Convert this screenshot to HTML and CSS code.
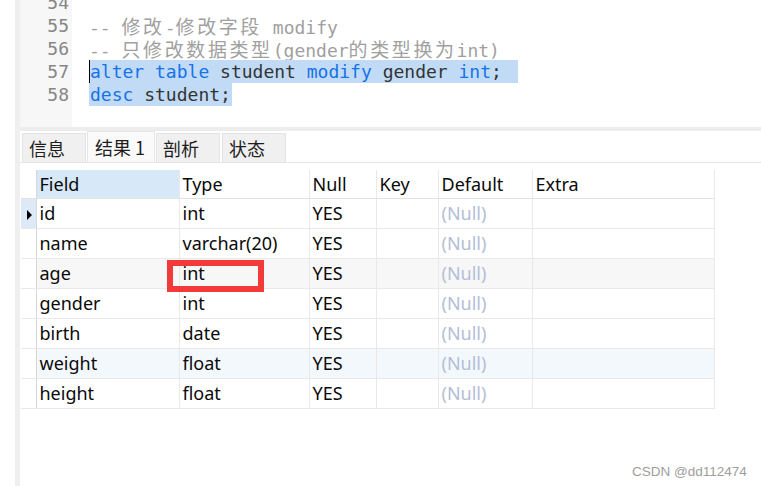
FILE: index.html
```html
<!DOCTYPE html>
<html lang="zh">
<head>
<meta charset="utf-8">
<title>Navicat</title>
<link rel="stylesheet" href="styles.css">
</head>
<body>
<div class="app">
  <div class="edge"></div>
  <div class="strip"></div>
  <div class="main">
    <div class="editor">
      <div class="gutter">
        <div class="ln">54</div>
        <div class="ln">55</div>
        <div class="ln">56</div>
        <div class="ln">57</div>
        <div class="ln">58</div>
        <div class="ln"></div>
      </div>
      <div class="code">
        <div class="line"></div>
        <div class="line"><span class="cm">-- <span class="cjk">修改</span>-<span class="cjk">修改字段</span> modify</span></div>
        <div class="line"><span class="cm">-- <span class="cjk">只修改数据类型</span>(gender<span class="cjk">的类型换为</span>int)</span></div>
        <div class="line"><span class="sel sel1"><span class="kw">alter</span> <span class="kw">table</span> student <span class="kw">modify</span> gender <span class="kw">int</span>;</span></div>
        <div class="line"><span class="sel sel2"><span class="kw">desc</span> student;</span></div>
      </div>
    </div>
    <div class="sep"></div>
    <div class="tabs">
      <div class="tab">信息</div>
      <div class="tab active">结果 1</div>
      <div class="tab">剖析</div>
      <div class="tab">状态</div>
    </div>
    <table class="grid">
      <colgroup>
        <col class="c-ind"><col class="c-field"><col class="c-type"><col class="c-null"><col class="c-key"><col class="c-def"><col class="c-extra">
      </colgroup>
      <thead>
        <tr class="hd">
          <th class="ind"></th>
          <th class="hl">Field</th>
          <th>Type</th>
          <th>Null</th>
          <th>Key</th>
          <th>Default</th>
          <th>Extra</th>
        </tr>
      </thead>
      <tbody>
        <tr>
          <td class="ind cur"><span class="tri"></span></td>
          <td>id</td><td>int</td><td>YES</td><td></td><td class="null">(Null)</td><td></td>
        </tr>
        <tr>
          <td class="ind"></td>
          <td>name</td><td>varchar(20)</td><td>YES</td><td></td><td class="null">(Null)</td><td></td>
        </tr>
        <tr class="gray">
          <td class="ind"></td>
          <td>age</td><td class="mark">int<div class="redbox"></div></td><td>YES</td><td></td><td class="null">(Null)</td><td></td>
        </tr>
        <tr>
          <td class="ind"></td>
          <td>gender</td><td>int</td><td>YES</td><td></td><td class="null">(Null)</td><td></td>
        </tr>
        <tr>
          <td class="ind"></td>
          <td>birth</td><td>date</td><td>YES</td><td></td><td class="null">(Null)</td><td></td>
        </tr>
        <tr class="blue">
          <td class="ind"></td>
          <td>weight</td><td>float</td><td>YES</td><td></td><td class="null">(Null)</td><td></td>
        </tr>
        <tr>
          <td class="ind"></td>
          <td>height</td><td>float</td><td>YES</td><td></td><td class="null">(Null)</td><td></td>
        </tr>
      </tbody>
    </table>
  </div>
</div>
<div class="watermark">CSDN @dd112474</div>
</body>
</html>
```
FILE: styles.css
```css
html, body {
  margin: 0;
  padding: 0;
  background: #ffffff;
  width: 761px;
  height: 486px;
  overflow: hidden;
}

.app {
  display: flex;
  height: 486px;
}

.edge {
  width: 15px;
  flex: none;
}

.strip {
  width: 5px;
  flex: none;
  background: #efefef;
}

.main {
  flex: 1;
  display: flex;
  flex-direction: column;
  min-width: 0;
}

/* ---------- editor ---------- */
.editor {
  height: 127px;
  display: flex;
  overflow: hidden;
  font-family: "DejaVu Sans Mono", "Liberation Mono", monospace;
  font-size: 18px;
}

.gutter {
  width: 52px;
  flex: none;
  background: #f7f7f7;
  box-sizing: border-box;
  padding-right: 3px;
  margin-top: -9px;
  text-align: right;
  color: #868686;
}

.ln {
  height: 23px;
  line-height: 23px;
}

.code {
  flex: 1;
  padding-left: 17px;
  margin-top: -9px;
  color: #333333;
}

.line {
  height: 23px;
  line-height: 23px;
  white-space: pre;
}

.cm {
  color: #a0a0a0;
}

.cjk {
  font-family: "Noto Sans CJK SC", sans-serif;
  font-size: 19px;
  letter-spacing: 2.6px;
  line-height: 23px;
}

.kw {
  color: #1572e8;
}

.sel {
  display: inline-block;
  height: 23px;
  background: #c1dbf6;
  box-sizing: border-box;
}

.sel1 {
  width: 429px;
  border-left: 1px solid #000000;
}

.sel2 {
  width: 143px;
  padding-left: 1px;
}

.sep {
  height: 4px;
  background: #ededed;
  flex: none;
}

/* ---------- tabs ---------- */
.tabs {
  display: flex;
  align-items: flex-end;
  gap: 1px;
  height: 31px;
  padding-left: 2px;
  border-bottom: 1px solid #e5e5e5;
  flex: none;
  font-family: "Noto Sans CJK SC", sans-serif;
  font-size: 18px;
  color: #1e1e1e;
}

.tab {
  width: 64px;
  height: 29px;
  box-sizing: border-box;
  padding-left: 6px;
  background: #f0f0f0;
  border: 1px solid #e4e4e4;
  border-bottom: none;
  line-height: 28px;
}

.tab.active {
  width: 68px;
  height: 31px;
  line-height: 30px;
  background: #fafafa;
  padding-left: 7px;
}

.tab:last-child {
  margin-left: 1px;
}

/* ---------- grid ---------- */
.grid {
  margin-top: 7px;
  margin-left: 1px;
  width: 693px;
  table-layout: fixed;
  border-collapse: collapse;
  font-family: "Noto Sans", "Open Sans", sans-serif;
  font-size: 18px;
  color: #0a0a0a;
}

.c-ind { width: 15px; }
.c-field { width: 143px; }
.c-type { width: 130px; }
.c-null { width: 67px; }
.c-key { width: 62px; }
.c-def { width: 94px; }
.c-extra { width: 182px; }

.grid th,
.grid td {
  padding: 0 0 0 3px;
  text-align: left;
  font-weight: normal;
  border: 1px solid #e9e9e9;
  line-height: 20px;
  vertical-align: middle;
  white-space: nowrap;
}

.grid th {
  border-top: none;
  border-bottom-color: #e2e2e2;
}

.grid tr.hd {
  height: 28px;
}

.grid tbody tr {
  height: 30px;
}

.grid .ind {
  padding: 0;
  border-left: none;
  border-right-color: #d6d6d6;
}

.grid th.hl {
  background: #d7e8f8;
}

.grid td.cur {
  background: #dde9f6;
  text-align: center;
}

.tri {
  display: inline-block;
  width: 0;
  height: 0;
  border-left: 5px solid #000000;
  border-top: 5px solid transparent;
  border-bottom: 5px solid transparent;
  vertical-align: middle;
  margin-left: 2px;
}

.grid tr.gray td {
  background: #f7f7f7;
}

.grid tr.blue td {
  background: #f3f8fd;
}

.grid tr.gray td.ind,
.grid tr.blue td.ind {
  background: #ffffff;
}

.grid td.null {
  color: #b3bed6;
}

.grid td.mark {
  position: relative;
}

.redbox {
  position: absolute;
  left: -13px;
  top: 1px;
  width: 97px;
  height: 32px;
  box-sizing: border-box;
  border: 6px solid #f23a3a;
}

/* ---------- watermark ---------- */
.watermark {
  position: absolute;
  left: 632px;
  top: 463px;
  font-family: "Liberation Sans", Arial, sans-serif;
  font-size: 13.5px;
  color: #9d9d9d;
  line-height: 18px;
}
```
